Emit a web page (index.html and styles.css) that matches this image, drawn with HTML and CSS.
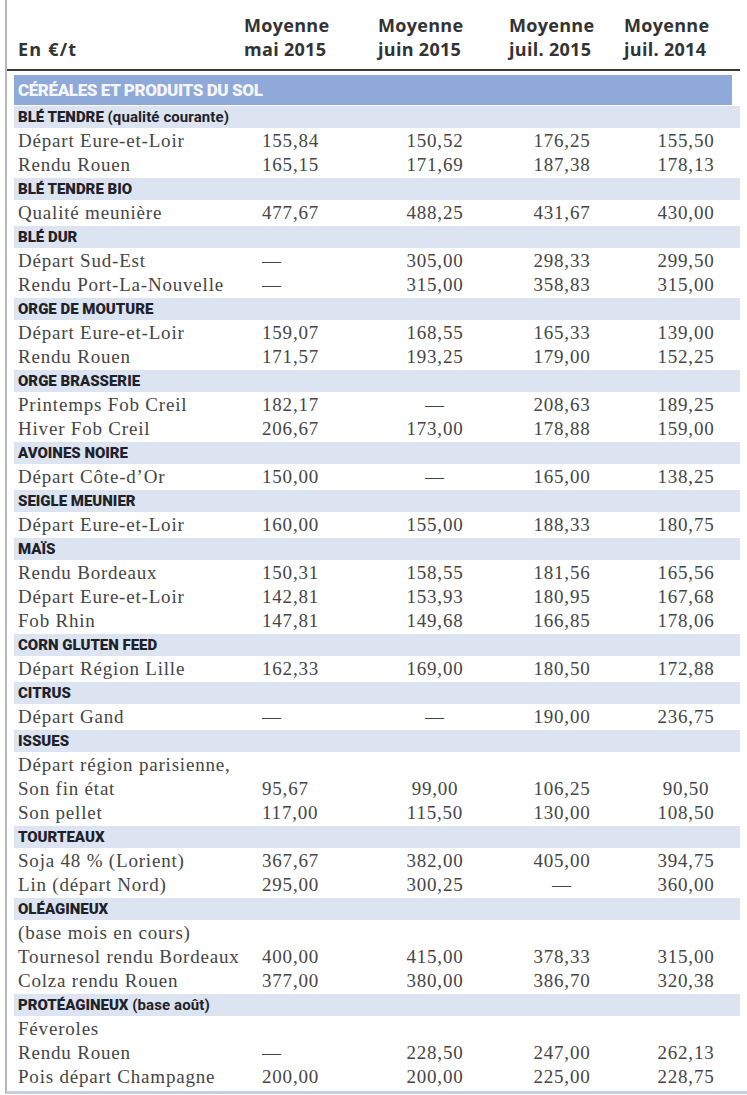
FILE: index.html
```html
<!DOCTYPE html>
<html lang="fr">
<head>
<meta charset="utf-8">
<title>Prix céréales</title>
<link rel="stylesheet" href="styles.css">
</head>
<body>
<div class="sheet">
  <div class="head">
    <div class="unit">En €/t</div>
    <div class="ch">Moyenne<br>mai 2015</div>
    <div class="ch">Moyenne<br>juin 2015</div>
    <div class="ch">Moyenne<br>juil. 2015</div>
    <div class="ch">Moyenne<br>juil. 2014</div>
  </div>
  <div class="table">
    <div class="cat">CÉRÉALES ET PRODUITS DU SOL</div>

    <div class="sec">BLÉ TENDRE <span class="low">(qualité courante)</span></div>
    <div class="row"><span>Départ Eure-et-Loir</span><span class="n1">155,84</span><span class="n">150,52</span><span class="n">176,25</span><span class="n n4">155,50</span></div>
    <div class="row"><span>Rendu Rouen</span><span class="n1">165,15</span><span class="n">171,69</span><span class="n">187,38</span><span class="n n4">178,13</span></div>

    <div class="sec">BLÉ TENDRE BIO</div>
    <div class="row"><span>Qualité meunière</span><span class="n1">477,67</span><span class="n">488,25</span><span class="n">431,67</span><span class="n n4">430,00</span></div>

    <div class="sec">BLÉ DUR</div>
    <div class="row"><span>Départ Sud-Est</span><span class="n1">—</span><span class="n">305,00</span><span class="n">298,33</span><span class="n n4">299,50</span></div>
    <div class="row"><span>Rendu Port-La-Nouvelle</span><span class="n1">—</span><span class="n">315,00</span><span class="n">358,83</span><span class="n n4">315,00</span></div>

    <div class="sec">ORGE DE MOUTURE</div>
    <div class="row"><span>Départ Eure-et-Loir</span><span class="n1">159,07</span><span class="n">168,55</span><span class="n">165,33</span><span class="n n4">139,00</span></div>
    <div class="row"><span>Rendu Rouen</span><span class="n1">171,57</span><span class="n">193,25</span><span class="n">179,00</span><span class="n n4">152,25</span></div>

    <div class="sec">ORGE BRASSERIE</div>
    <div class="row"><span>Printemps Fob Creil</span><span class="n1">182,17</span><span class="n">—</span><span class="n">208,63</span><span class="n n4">189,25</span></div>
    <div class="row"><span>Hiver Fob Creil</span><span class="n1">206,67</span><span class="n">173,00</span><span class="n">178,88</span><span class="n n4">159,00</span></div>

    <div class="sec">AVOINES NOIRE</div>
    <div class="row"><span>Départ Côte-d’Or</span><span class="n1">150,00</span><span class="n">—</span><span class="n">165,00</span><span class="n n4">138,25</span></div>

    <div class="sec">SEIGLE MEUNIER</div>
    <div class="row"><span>Départ Eure-et-Loir</span><span class="n1">160,00</span><span class="n">155,00</span><span class="n">188,33</span><span class="n n4">180,75</span></div>

    <div class="sec">MAÏS</div>
    <div class="row"><span>Rendu Bordeaux</span><span class="n1">150,31</span><span class="n">158,55</span><span class="n">181,56</span><span class="n n4">165,56</span></div>
    <div class="row"><span>Départ Eure-et-Loir</span><span class="n1">142,81</span><span class="n">153,93</span><span class="n">180,95</span><span class="n n4">167,68</span></div>
    <div class="row"><span>Fob Rhin</span><span class="n1">147,81</span><span class="n">149,68</span><span class="n">166,85</span><span class="n n4">178,06</span></div>

    <div class="sec">CORN GLUTEN FEED</div>
    <div class="row"><span>Départ Région Lille</span><span class="n1">162,33</span><span class="n">169,00</span><span class="n">180,50</span><span class="n n4">172,88</span></div>

    <div class="sec">CITRUS</div>
    <div class="row"><span>Départ Gand</span><span class="n1">—</span><span class="n">—</span><span class="n">190,00</span><span class="n n4">236,75</span></div>

    <div class="sec">ISSUES</div>
    <div class="row"><span>Départ région parisienne,</span><span></span><span></span><span></span><span></span></div>
    <div class="row"><span>Son fin état</span><span class="n1">95,67</span><span class="n">99,00</span><span class="n">106,25</span><span class="n n4">90,50</span></div>
    <div class="row"><span>Son pellet</span><span class="n1">117,00</span><span class="n">115,50</span><span class="n">130,00</span><span class="n n4">108,50</span></div>

    <div class="sec">TOURTEAUX</div>
    <div class="row"><span>Soja 48 % (Lorient)</span><span class="n1">367,67</span><span class="n">382,00</span><span class="n">405,00</span><span class="n n4">394,75</span></div>
    <div class="row"><span>Lin (départ Nord)</span><span class="n1">295,00</span><span class="n">300,25</span><span class="n">—</span><span class="n n4">360,00</span></div>

    <div class="sec">OLÉAGINEUX</div>
    <div class="row"><span>(base mois en cours)</span><span></span><span></span><span></span><span></span></div>
    <div class="row"><span>Tournesol rendu Bordeaux</span><span class="n1">400,00</span><span class="n">415,00</span><span class="n">378,33</span><span class="n n4">315,00</span></div>
    <div class="row"><span>Colza rendu Rouen</span><span class="n1">377,00</span><span class="n">380,00</span><span class="n">386,70</span><span class="n n4">320,38</span></div>

    <div class="sec">PROTÉAGINEUX <span class="low">(base août)</span></div>
    <div class="row"><span>Féveroles</span><span></span><span></span><span></span><span></span></div>
    <div class="row"><span>Rendu Rouen</span><span class="n1">—</span><span class="n">228,50</span><span class="n">247,00</span><span class="n n4">262,13</span></div>
    <div class="row"><span>Pois départ Champagne</span><span class="n1">200,00</span><span class="n">200,00</span><span class="n">225,00</span><span class="n n4">228,75</span></div>
  </div>
</div>
</body>
</html>
```

FILE: styles.css
```css
html, body {
  margin: 0;
  padding: 0;
  background: #ffffff;
}

.sheet {
  margin-left: 5px;
  width: 740px;
  border-left: 2px solid #b3b7c3;
  border-bottom: 3px solid #c6cfe1;
}

.head {
  display: grid;
  grid-template-columns: 226px 134px 131px 115px 1fr;
  align-items: end;
  padding: 13px 0 8px 11px;
  margin-right: 7px;
  border-bottom: 2px solid #3a3a3a;
  font-family: "Open Sans", "DejaVu Sans", sans-serif;
  font-weight: 700;
  font-size: 18px;
  line-height: 24px;
  letter-spacing: 0.3px;
  color: #333333;
}

.unit {
  letter-spacing: 1.2px;
}

.table {
  padding: 4px 7px 2px 7px;
}

.cat {
  height: 30px;
  margin-right: 8px;
  padding-left: 4px;
  background: #8fa9d9;
  color: #f4f6fb;
  font-family: "Roboto", "Liberation Sans", sans-serif;
  font-weight: 900;
  font-size: 17px;
  line-height: 31px;
  letter-spacing: -0.4px;
}

.sec {
  height: 22px;
  margin: 1px 0;
  padding-left: 4px;
  background: #dce3f1;
  color: #1f2229;
  font-family: "Roboto", "Liberation Sans", sans-serif;
  font-weight: 900;
  font-size: 15px;
  line-height: 22px;
  letter-spacing: 0;
}

.sec .low {
  font-weight: 700;
  letter-spacing: 0.1px;
}

.row {
  display: grid;
  grid-template-columns: 244px 110px 126px 128px 1fr;
  height: 24px;
  padding-left: 4px;
  font-family: "Liberation Serif", "DejaVu Serif", serif;
  font-size: 19px;
  line-height: 24px;
  letter-spacing: 0.8px;
  color: #454545;
  white-space: nowrap;
}

.n1 {
  text-align: left;
}

.n {
  text-align: center;
}

.n4 {
  padding-left: 6px;
}
```
